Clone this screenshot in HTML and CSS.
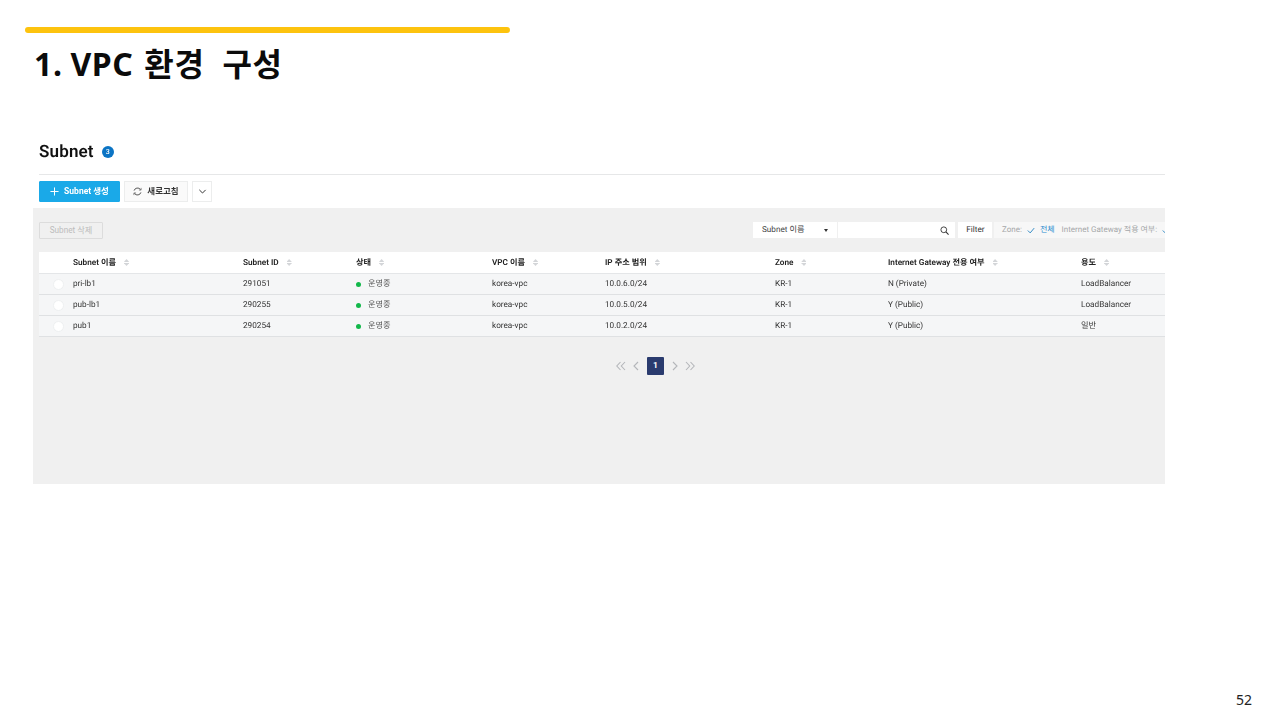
FILE: index.html
```html
<!DOCTYPE html>
<html lang="ko">
<head>
<meta charset="utf-8">
<title>1. VPC 환경 구성</title>
<link rel="stylesheet" href="styles.css">
</head>
<body>
<main class="slide">
  <div class="accent"></div>
  <h1 class="title">1. <span class="t-vpc">VPC</span> 환경 <span class="t-last">구성</span></h1>
  <section class="console">
    <header class="heading">
      <h2 class="heading-text">Subnet</h2>
      <span class="count">3</span>
    </header>
    <div class="actions">
      <button class="btn btn-primary">
        <svg class="ico" viewBox="0 0 10 10"><path d="M5 .5v9M.5 5h9" fill="none" stroke="#fff" stroke-width="1.1"/></svg>
        Subnet 생성
      </button>
      <button class="btn btn-light">
        <svg class="ico" viewBox="0 0 10 10"><path d="M1.2 4A4 4 0 0 1 8.3 2.8M8.8 6A4 4 0 0 1 1.7 7.2" fill="none" stroke="#333" stroke-width=".9"/><path d="M9 1v2.4H6.6M1 9V6.600h2.400" fill="none" stroke="#333" stroke-width=".6"/></svg>
        새로고침
      </button>
      <button class="btn btn-more">
        <svg class="ico" viewBox="0 0 10 10"><path d="M1.500 3.200 5 6.700l3.500-3.500" fill="none" stroke="#333" stroke-width="1.100"/></svg>
      </button>
    </div>
    <div class="panel">
      <div class="toolbar">
        <button class="btn-delete">Subnet 삭제</button>
        <div class="search">
          <div class="select"><span>Subnet 이름</span><span class="caret"></span></div>
          <div class="input">
            <svg class="search-ico" viewBox="0 0 10 10"><circle cx="4.200" cy="4.200" r="3.200" fill="none" stroke="#333" stroke-width="1"/><path d="M6.600 6.600 9.500 9.500" stroke="#333" stroke-width="1.200"/></svg>
          </div>
          <div class="filter-btn">Filter</div>
          <div class="filter-bar">
            <span>Zone:</span>
            <svg class="check" viewBox="0 0 10 8"><path d="M1 4l3 3 5-6" fill="none" stroke="#1f7fc0" stroke-width="1.100"/></svg>
            <span class="all">전체</span>
            <span class="gw">Internet Gateway 적용 여부:</span>
            <svg class="check" viewBox="0 0 10 8"><path d="M1 4l3 3 5-6" fill="none" stroke="#1f7fc0" stroke-width="1.100"/></svg>
          </div>
        </div>
      </div>
      <div class="table">
        <div class="row row-head">
          <span></span>
          <span class="th">Subnet 이름<i class="sort"></i></span>
          <span class="th">Subnet ID<i class="sort"></i></span>
          <span class="th">상태<i class="sort"></i></span>
          <span class="th">VPC 이름<i class="sort"></i></span>
          <span class="th">IP 주소 범위<i class="sort"></i></span>
          <span class="th">Zone<i class="sort"></i></span>
          <span class="th">Internet Gateway 전용 여부<i class="sort"></i></span>
          <span class="th">용도<i class="sort"></i></span>
        </div>
        <div class="row">
          <span class="radio"></span><span>pri-lb1</span><span>291051</span>
          <span class="status"><i class="dot"></i>운영중</span><span>korea-vpc</span><span>10.0.6.0/24</span>
          <span>KR-1</span><span>N (Private)</span><span>LoadBalancer</span>
        </div>
        <div class="row">
          <span class="radio"></span><span>pub-lb1</span><span>290255</span>
          <span class="status"><i class="dot"></i>운영중</span><span>korea-vpc</span><span>10.0.5.0/24</span>
          <span>KR-1</span><span>Y (Public)</span><span>LoadBalancer</span>
        </div>
        <div class="row">
          <span class="radio"></span><span>pub1</span><span>290254</span>
          <span class="status"><i class="dot"></i>운영중</span><span>korea-vpc</span><span>10.0.2.0/24</span>
          <span>KR-1</span><span>Y (Public)</span><span>일반</span>
        </div>
      </div>
      <nav class="pager">
        <svg class="pg" viewBox="0 0 10 10"><path d="M4.500 1 .8 5l3.700 4M9 1 5.300 5 9 9" fill="none" stroke="#b4b6ba" stroke-width="1.100"/></svg>
        <svg class="pg" viewBox="0 0 10 10"><path d="M7 1 3 5l4 4" fill="none" stroke="#b4b6ba" stroke-width="1.100"/></svg>
        <span class="page-current">1</span>
        <svg class="pg" viewBox="0 0 10 10"><path d="M3 1l4 4-4 4" fill="none" stroke="#b4b6ba" stroke-width="1.100"/></svg>
        <svg class="pg" viewBox="0 0 10 10"><path d="M1 1l3.700 4L1 9M5.500 1l3.700 4-3.700 4" fill="none" stroke="#b4b6ba" stroke-width="1.100"/></svg>
      </nav>
    </div>
  </section>
  <div class="page-no">52</div>
</main>
</body>
</html>
```
FILE: styles.css
```css
* { box-sizing: border-box; }
html, body { margin: 0; padding: 0; background: #fff; }
body { font-family: Roboto, "Noto Sans CJK KR", sans-serif; }
.slide { width: 1280px; height: 720px; padding: 27px 0 0 25px; display: flex; flex-direction: column; overflow: hidden; }
.accent { width: 485px; height: 6px; background: #fdc30e; border-radius: 3px; flex: none; }
.title { margin: 6px 0 0 9px; font: 700 32px/50px "Noto Sans", "Noto Sans CJK KR", sans-serif; color: #0b0b0b; letter-spacing: .6px; word-spacing: -1px; height: 50px; }
.t-vpc { margin-right: 3px; }
.t-last { margin-left: 10px; }
.console { width: 1132px; margin: 53px 0 0 8px; filter: blur(.35px); text-rendering: geometricPrecision; }
.heading { margin-left: 6px; height: 33px; border-bottom: 1px solid #e6e7e8; display: flex; align-items: flex-start; gap: 8px; }
.heading-text { margin: 0; font: 600 17px/20px Roboto, sans-serif; color: #111; letter-spacing: .15px; }
.count { margin-top: 4px; width: 12px; height: 12px; border-radius: 50%; background: #0b74c4; color: #fff; font: 500 7px/12px Roboto, sans-serif; text-align: center; }
.actions { margin: 6px 0 6px 6px; display: flex; gap: 4px; height: 21px; }
.btn { height: 21px; padding: 0; border: 1px solid #eceded; background: #fafafa; color: #333; font: 700 8.500px/19px Roboto, "Noto Sans CJK KR", sans-serif; display: flex; align-items: center; justify-content: center; gap: 5px; }
.btn-primary { width: 81px; background: #1aa9e8; border-color: #1aa9e8; color: #fff; border-radius: 1px; }
.btn-light { width: 64px; }
.btn-more { width: 20px; background: #fff; }
.ico { width: 9px; height: 9px; flex: none; }
.panel { background: #f0f0f0; height: 276px; overflow: hidden; padding: 14px 0 0 6px; }
.toolbar { display: flex; justify-content: space-between; height: 16px; margin-bottom: 14px; }
.btn-delete { width: 64px; height: 17px; padding: 0; background: #f0f0f0; border: 1px solid #dcdcdc; border-radius: 1px; color: #bcbcbc; font: 400 8.200px/15px Roboto, "Noto Sans CJK KR", sans-serif; }
.search { display: flex; width: 412px; flex: none; font: 400 8.200px/16px Roboto, "Noto Sans CJK KR", sans-serif; color: #444; }
.select { width: 84px; flex: none; background: #fff; padding: 0 9px 0 9px; display: flex; justify-content: space-between; align-items: center; margin-right: 1px; }
.caret { border: 2.500px solid transparent; border-top: 3px solid #333; border-bottom: 0; }
.input { width: 117px; flex: none; background: #fff; display: flex; justify-content: flex-end; align-items: center; padding-right: 6px; margin-right: 3px; }
.search-ico { width: 9px; height: 9px; }
.filter-btn { width: 34px; flex: none; background: #fff; text-align: center; color: #333; margin-right: 2px; padding-left: 1px; }
.filter-bar { flex: none; width: 180px; background: #f7f7f7; color: #a5a7a9; font-size: 8px; padding-left: 8px; display: flex; align-items: center; gap: 5px; white-space: nowrap; }
.check { width: 8px; height: 7px; flex: none; }
.all { color: #2a8ccf; margin-right: 2px; }
.table { font: 400 8.200px/20px Roboto, "Noto Sans CJK KR", sans-serif; color: #333; }
.row { display: grid; grid-template-columns: 34px 170px 113px 136px 113px 170px 113px 193px 84px; height: 21px; background: #f5f6f7; border-bottom: 1px solid #dfe1e3; align-items: center; white-space: nowrap; }
.row-head { height: 22px; background: #fff; border-bottom-color: #e4e6e8; }
.th { font-weight: 600; font-size: 8.200px; color: #222; display: flex; align-items: center; gap: 8px; }
.sort { display: inline-flex; width: 5px; height: 7px; background: linear-gradient(#d3d5d8 0 3px, transparent 3px 4px, #d3d5d8 4px 7px); clip-path: polygon(50% 0, 100% 40%, 100% 60%, 50% 100%, 0 60%, 0 40%); }
.radio { justify-self: center; margin-left: 4px; width: 11px; height: 11px; border-radius: 50%; background: #fff; border: 1px solid #eef0f1; }
.status { display: flex; align-items: center; gap: 7px; color: #555; }
.dot { width: 5px; height: 5px; border-radius: 50%; background: #12b84a; }
.pager { display: flex; justify-content: center; align-items: center; gap: 5px; margin: 20px 0 0 107px; height: 18px; }
.pg { width: 10px; height: 10px; }
.page-current { width: 17px; height: 18px; margin: 0 1px; background: #2a3b6e; color: #fff; font: 700 8.500px/18px Roboto, sans-serif; text-align: center; border-radius: 1px; }
.page-no { position: absolute; left: 1236px; top: 690px; font: 400 14px/20px "Noto Sans", sans-serif; color: #222; }
```
